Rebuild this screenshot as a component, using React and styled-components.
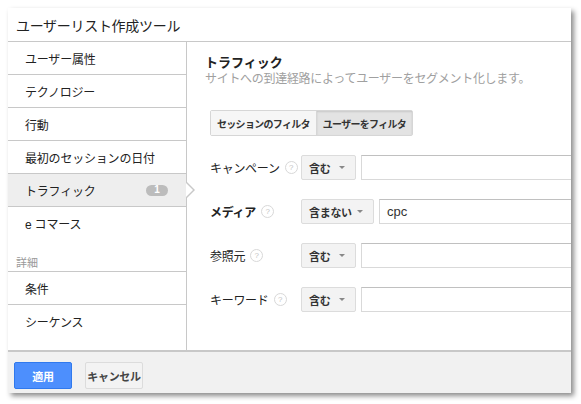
import styled, { createGlobalStyle } from "styled-components";

const Global = createGlobalStyle`
   html, body {
      margin: 0;
      background: #fff;
   }
   body {
      font-family: Arial, "Liberation Sans", "Noto Sans CJK JP", sans-serif;
      color: #222;
   }
`

const Dialog = styled.div`
   position: relative;
   margin: 8px;
   width: 563px;
   height: 385px;
   background: #fff;
   box-shadow: 3px 3px 5px rgba(0, 0, 0, 0.45);
   display: flex;
   flex-direction: column;
   overflow: hidden;
`

const TitleBar = styled.div`
   height: 33px;
   flex-shrink: 0;
   border-bottom: 1px solid #c8c8c8;
   display: flex;
   align-items: center;
   padding-left: 8px;
   font-size: 14px;
   letter-spacing: -0.3px;
   color: #222;
`

const Body = styled.div`
   flex: 1;
   display: flex;
   min-height: 0;
`

const Sidebar = styled.div`
   width: 178px;
   border-right: 1px solid #c8c8c8;
   display: flex;
   flex-direction: column;
   flex-shrink: 0;
`

const NavItem = styled.div`
   position: relative;
   height: 32px;
   flex-shrink: 0;
   display: flex;
   align-items: center;
   padding-left: 17px;
   padding-right: 18px;
   font-size: 12px;
   letter-spacing: -0.2px;
   white-space: nowrap;
   color: #222;
   background: ${(p) => (p.$active ? "#eeeeee" : "#fff")};
   border-bottom: ${(p) => (p.$noBorder ? "none" : "1px solid #c8c8c8")};
   ${(p) => p.$tall && "flex: 1; align-items: flex-start; padding-top: 8px;"}
`

const Badge = styled.span`
   margin-left: auto;
   width: 22px;
   height: 11px;
   border-radius: 6px;
   background: #bcbcbc;
   color: #fff;
   font-size: 10px;
   font-weight: bold;
   display: flex;
   align-items: center;
   justify-content: center;
   line-height: 1;
`

const Pointer = styled.span`
   position: absolute;
   right: -9px;
   top: 8px;
   width: 0;
   height: 0;
   border-top: 8px solid transparent;
   border-bottom: 8px solid transparent;
   border-left: 8px solid #c8c8c8;
   &::after {
      content: "";
      position: absolute;
      left: -9px;
      top: -7px;
      border-top: 7px solid transparent;
      border-bottom: 7px solid transparent;
      border-left: 7px solid #fff;
   }
`

const SectionLabel = styled.div`
   height: 33px;
   flex-shrink: 0;
   box-sizing: border-box;
   border-bottom: 1px solid #c8c8c8;
   display: flex;
   align-items: flex-end;
   padding-left: 8px;
   padding-bottom: 1px;
   font-size: 11px;
   color: #999;
`

const Pane = styled.div`
   flex: 1;
   padding: 12px 0 0 18px;
   min-width: 0;
`

const Heading = styled.div`
   font-size: 13px;
   font-weight: bold;
   color: #222;
   line-height: 17px;
`

const Sub = styled.div`
   font-size: 12px;
   letter-spacing: -0.3px;
   color: #a0a0a0;
   line-height: 16px;
   white-space: nowrap;
`

const Toggle = styled.div`
   display: inline-flex;
   margin: 23px 0 0 5px;
   border: 1px solid #d6d6d6;
   border-radius: 2px;
`

const ToggleBtn = styled.div`
   height: 24px;
   padding: 0 6px;
   display: flex;
   align-items: center;
   font-size: 10px;
   letter-spacing: -0.7px;
   font-weight: bold;
   color: #333;
   white-space: nowrap;
   background: ${(p) => (p.$on ? "#e3e3e3" : "#f6f6f6")};
   box-shadow: ${(p) => (p.$on ? "inset 0 1px 2px rgba(0,0,0,0.12)" : "none")};
   & + & {
      border-left: 1px solid #d6d6d6;
   }
`

const Rows = styled.div`
   display: flex;
   flex-direction: column;
   gap: 19px;
   margin: 19px 0 0 5px;
`

const Row = styled.div`
   display: flex;
   align-items: center;
   height: 25px;
`

const Label = styled.div`
   width: 91px;
   display: flex;
   align-items: center;
   gap: 5px;
   font-size: 12px;
   letter-spacing: -0.3px;
   white-space: nowrap;
   font-weight: ${(p) => (p.$bold ? "bold" : "normal")};
   color: #222;
   flex-shrink: 0;
`

const Help = styled.span`
   width: 11px;
   height: 11px;
   border-radius: 50%;
   border: 1px solid #d8d8d8;
   color: #c4c4c4;
   font-size: 8px;
   font-weight: normal;
   display: inline-flex;
   align-items: center;
   justify-content: center;
   font-family: Arial, "Liberation Sans", sans-serif;
`

const Select = styled.div`
   width: ${(p) => p.$w}px;
   height: 25px;
   box-sizing: border-box;
   border: 1px solid #dcdcdc;
   border-radius: 2px;
   background: #f3f3f3;
   display: flex;
   align-items: center;
   padding-left: 7px;
   font-size: 11px;
   letter-spacing: -0.3px;
   font-weight: bold;
   color: #333;
   flex-shrink: 0;
   &::after {
      content: "";
      margin-left: auto;
      margin-right: 10px;
      border-left: 3px solid transparent;
      border-right: 3px solid transparent;
      border-top: 3px solid #888;
   }
`

const Input = styled.div`
   margin-left: 5px;
   height: 25px;
   box-sizing: border-box;
   width: 260px;
   flex-shrink: 0;
   border: 1px solid #d9d9d9;
   border-top-color: #c0c0c0;
   display: flex;
   align-items: center;
   padding-left: 7px;
   font-size: 13px;
   color: #333;
`

const Footer = styled.div`
   height: 31px;
   flex-shrink: 0;
   border-top: 2px solid #c8c8c8;
   background: #f1f1f1;
   display: flex;
   align-items: flex-start;
   gap: 13px;
   padding: 10px 0 0 6px;
`

const Button = styled.div`
   width: 58px;
   height: 27px;
   box-sizing: border-box;
   border: 1px solid ${(p) => (p.$primary ? "#3079ed" : "#dcdcdc")};
   border-radius: 2px;
   background: ${(p) => (p.$primary ? "#4d8ffd" : "#f3f3f3")};
   color: ${(p) => (p.$primary ? "#fff" : "#444")};
   font-size: 11px;
   letter-spacing: -0.3px;
   font-weight: bold;
   display: flex;
   align-items: center;
   justify-content: center;
`

const nav = ["ユーザー属性", "テクノロジー", "行動", "最初のセッションの日付"]

const rows = [
   { label: "キャンペーン", op: "含む", w: 55 },
   { label: "メディア", op: "含まない", w: 73, bold: true, value: "cpc" },
   { label: "参照元", op: "含む", w: 55 },
   { label: "キーワード", op: "含む", w: 55 },
]

export default function App() {
   return (
      <>
         <Global />
         <Dialog>
            <TitleBar>ユーザーリスト作成ツール</TitleBar>
            <Body>
               <Sidebar>
                  {nav.map((n) => (
                     <NavItem key={n}>{n}</NavItem>
                  ))}
                  <NavItem $active>
                     トラフィック
                     <Badge>1</Badge>
                     <Pointer />
                  </NavItem>
                  <NavItem $noBorder>e コマース</NavItem>
                  <SectionLabel>詳細</SectionLabel>
                  <NavItem>条件</NavItem>
                  <NavItem $noBorder $tall>シーケンス</NavItem>
               </Sidebar>
               <Pane>
                  <Heading>トラフィック</Heading>
                  <Sub>サイトへの到達経路によってユーザーをセグメント化します。</Sub>
                  <Toggle>
                     <ToggleBtn>セッションのフィルタ</ToggleBtn>
                     <ToggleBtn $on>ユーザーをフィルタ</ToggleBtn>
                  </Toggle>
                  <Rows>
                     {rows.map((r) => (
                        <Row key={r.label}>
                           <Label $bold={r.bold}>
                              {r.label}
                              <Help>?</Help>
                           </Label>
                           <Select $w={r.w}>{r.op}</Select>
                           <Input>{r.value}</Input>
                        </Row>
                     ))}
                  </Rows>
               </Pane>
            </Body>
            <Footer>
               <Button $primary>適用</Button>
               <Button>キャンセル</Button>
            </Footer>
         </Dialog>
      </>
   )
}
